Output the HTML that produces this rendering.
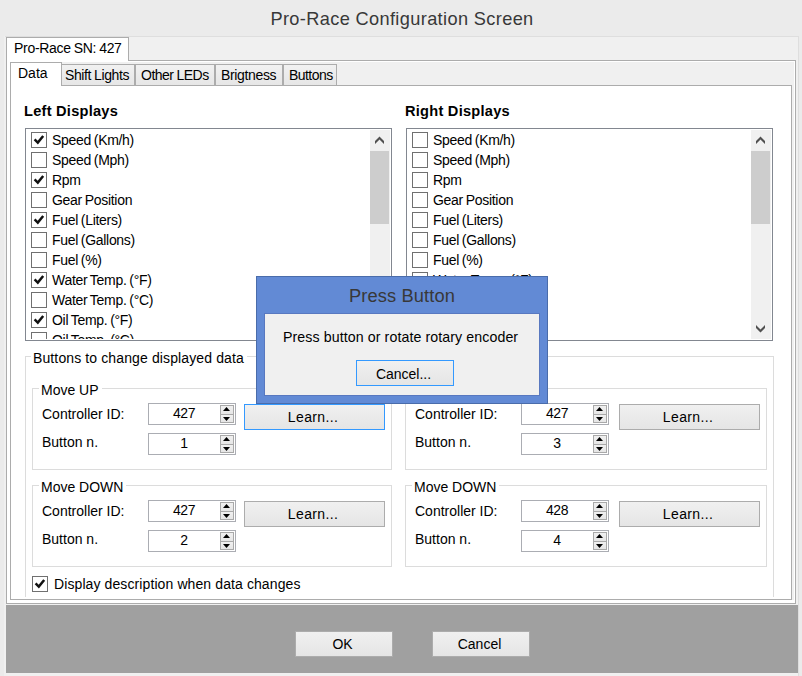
<!DOCTYPE html>
<html>
<head>
<meta charset="utf-8">
<title>Pro-Race Configuration Screen</title>
<style>
html,body{margin:0;padding:0;}
body{width:802px;height:676px;overflow:hidden;background:#ebebeb;position:relative;
  font-family:"Liberation Sans",sans-serif;font-size:14px;color:#000;}
*{box-sizing:border-box;}
.abs{position:absolute;}
.t{position:absolute;white-space:nowrap;line-height:16px;height:16px;}
.title{position:absolute;left:1px;top:6px;width:802px;text-align:center;font-family:"Liberation Sans",sans-serif;
  font-size:18.2px;letter-spacing:0.36px;line-height:26px;color:#383838;white-space:nowrap;}
/* window client */
#client{left:4px;top:36px;width:795px;height:640px;background:#f0f0f0;}
#cl-top{left:5px;top:36px;width:794px;height:1px;background:#dedede;}
#cl-right{left:798px;top:36px;width:1px;height:640px;background:#dedede;}
/* outer tab */
#opane{left:6px;top:60px;width:790px;height:544px;border:1px solid #acacac;background:#fff;}
#otab{left:6px;top:37px;width:123px;height:24px;border:1px solid #acacac;border-bottom:none;background:#fff;}
/* inner tab control */
#istrip{left:10px;top:62px;width:784px;height:24px;background:#f0f0f0;}
#imargin{left:10px;top:62px;width:784px;height:538px;background:#f0f0f0;}
#ipane{left:10px;top:85px;width:782px;height:515px;border:1px solid #acacac;background:#fff;}
.itab{position:absolute;top:64px;height:21px;border:1px solid #acacac;border-bottom:none;border-left:none;
  background:linear-gradient(#f1f1f1,#e6e6e6);}
#itab0{left:10px;top:62px;width:52px;height:24px;border:1px solid #acacac;border-bottom:none;background:#fff;}
/* listbox */
.lb{position:absolute;top:128px;height:213px;border:1px solid #828790;background:#fff;overflow:hidden;font-size:14px;letter-spacing:-0.3px;word-spacing:-0.8px;}
.cb{position:absolute;width:16px;height:16px;border:1px solid #707070;background:#fff;}
.cb svg{position:absolute;left:0;top:0;}
.sb{position:absolute;top:1px;right:1px;width:20px;height:209px;background:#f0f0f0;}
.sb .thumb{position:absolute;left:0;top:21px;width:19px;height:73px;background:#cdcdcd;}
.sb svg{position:absolute;left:0;}
/* groupbox */
.gb{position:absolute;border:1px solid #dcdcdc;}
.gbl{position:absolute;background:#fff;white-space:nowrap;line-height:16px;height:16px;padding:0 3px 0 2px;}
/* spin */
.spin{position:absolute;width:88px;height:22px;border:1px solid #abadb3;background:#fff;}
.spin .v{position:absolute;left:0;top:1px;width:70px;text-align:center;line-height:16px;font-size:14px;letter-spacing:-0.5px;}
.spin .u,.spin .d{position:absolute;left:71px;width:14px;border:1px solid #a9a9a9;background:linear-gradient(#f0f0f0,#e6e6e6);}
.spin .u{top:1px;height:10px;}
.spin .d{top:10px;height:9px;}
.spin svg{position:absolute;left:0;top:0;}
/* buttons */
.btn{position:absolute;border:1px solid #acacac;background:linear-gradient(#f0f0f0,#e5e5e5);text-align:center;white-space:nowrap;padding-right:3px;}
.btn.focus{border-color:#3399ff;}
/* popup */
#popup{left:256px;top:276px;width:292px;height:128px;background:#628ad5;border:1px solid #4a6caa;}
#pclient{left:264px;top:313px;width:276px;height:83px;background:#f0f0f0;border:1px solid #5878c0;}
#ptitle{left:256px;top:283px;width:292px;text-align:center;font-size:18.3px;letter-spacing:0.1px;line-height:26px;color:#383838;white-space:nowrap;}
/* bottom band */
#band{left:6px;top:605px;width:792px;height:68px;background:#a0a0a0;}
</style>
</head>
<body>
<div class="title">Pro-Race Configuration Screen</div>
<div class="abs" id="client"></div>
<div class="abs" id="cl-top"></div>
<div class="abs" id="cl-right"></div>

<div class="abs" id="opane"></div>
<div class="abs" id="otab"></div>
<div class="t" style="left:14px;top:40px;letter-spacing:-0.3px;word-spacing:-0.6px;">Pro-Race SN: 427</div>

<div class="abs" id="imargin"></div>
<div class="abs" id="ipane"></div>
<div class="itab" style="left:62px;width:73px;"></div>
<div class="itab" style="left:135px;width:80px;border-left:1px solid #acacac;"></div>
<div class="itab" style="left:215px;width:68px;border-left:1px solid #acacac;"></div>
<div class="itab" style="left:283px;width:54px;border-left:1px solid #acacac;"></div>
<div class="abs" id="itab0"></div>
<div class="t" style="left:18px;top:65px;">Data</div>
<div class="t" style="left:65px;top:67px;letter-spacing:-0.4px;word-spacing:-0.4px;">Shift Lights</div>
<div class="t" style="left:141px;top:67px;letter-spacing:-0.5px;word-spacing:-0.5px;">Other LEDs</div>
<div class="t" style="left:221px;top:67px;letter-spacing:-0.35px;">Brigtness</div>
<div class="t" style="left:289px;top:67px;letter-spacing:-0.55px;">Buttons</div>

<div class="t" style="left:24px;top:103px;font-weight:bold;font-size:14.6px;letter-spacing:0.25px;">Left Displays</div>
<div class="t" style="left:405px;top:103px;font-weight:bold;font-size:14.6px;letter-spacing:0.25px;">Right Displays</div>

<!-- LEFT LISTBOX -->
<div class="lb" id="lbL" style="left:25px;width:367px;">
  <div class="cb" style="left:5px;top:3px;"><svg width="14" height="14" viewBox="0 0 14 14"><path d="M2.6 6.4 L5.8 9.6 L11.2 3.0" fill="none" stroke="#111" stroke-width="2.5"/></svg></div><div class="t" style="left:26px;top:3px;">Speed (Km/h)</div>
  <div class="cb" style="left:5px;top:23px;"></div><div class="t" style="left:26px;top:23px;">Speed (Mph)</div>
  <div class="cb" style="left:5px;top:43px;"><svg width="14" height="14" viewBox="0 0 14 14"><path d="M2.6 6.4 L5.8 9.6 L11.2 3.0" fill="none" stroke="#111" stroke-width="2.5"/></svg></div><div class="t" style="left:26px;top:43px;">Rpm</div>
  <div class="cb" style="left:5px;top:63px;"></div><div class="t" style="left:26px;top:63px;">Gear Position</div>
  <div class="cb" style="left:5px;top:83px;"><svg width="14" height="14" viewBox="0 0 14 14"><path d="M2.6 6.4 L5.8 9.6 L11.2 3.0" fill="none" stroke="#111" stroke-width="2.5"/></svg></div><div class="t" style="left:26px;top:83px;">Fuel (Liters)</div>
  <div class="cb" style="left:5px;top:103px;"></div><div class="t" style="left:26px;top:103px;">Fuel (Gallons)</div>
  <div class="cb" style="left:5px;top:123px;"></div><div class="t" style="left:26px;top:123px;">Fuel (%)</div>
  <div class="cb" style="left:5px;top:143px;"><svg width="14" height="14" viewBox="0 0 14 14"><path d="M2.6 6.4 L5.8 9.6 L11.2 3.0" fill="none" stroke="#111" stroke-width="2.5"/></svg></div><div class="t" style="left:26px;top:143px;">Water Temp. (°F)</div>
  <div class="cb" style="left:5px;top:163px;"></div><div class="t" style="left:26px;top:163px;">Water Temp. (°C)</div>
  <div class="cb" style="left:5px;top:183px;"><svg width="14" height="14" viewBox="0 0 14 14"><path d="M2.6 6.4 L5.8 9.6 L11.2 3.0" fill="none" stroke="#111" stroke-width="2.5"/></svg></div><div class="t" style="left:26px;top:183px;">Oil Temp. (°F)</div>
  <div class="cb" style="left:5px;top:203px;"></div><div class="t" style="left:26px;top:203px;">Oil Temp. (°C)</div>
  <div class="abs" style="left:0;bottom:0;width:100%;height:1px;background:#fff;"></div>
  <div class="sb">
    <div class="thumb"></div>
    <svg width="20" height="21" style="top:0"><path d="M5 11 L9.5 6.5 L14 11 L14 14 L9.5 9.5 L5 14 Z" fill="#505050"/></svg>
    <svg width="20" height="21" style="top:188px"><path d="M5 7 L9.5 11.5 L14 7 L14 10 L9.5 14.5 L5 10 Z" fill="#505050"/></svg>
  </div>
</div>
<!-- RIGHT LISTBOX -->
<div class="lb" id="lbR" style="left:406px;width:367px;">
  <div class="cb" style="left:5px;top:3px;"></div><div class="t" style="left:26px;top:3px;">Speed (Km/h)</div>
  <div class="cb" style="left:5px;top:23px;"></div><div class="t" style="left:26px;top:23px;">Speed (Mph)</div>
  <div class="cb" style="left:5px;top:43px;"></div><div class="t" style="left:26px;top:43px;">Rpm</div>
  <div class="cb" style="left:5px;top:63px;"></div><div class="t" style="left:26px;top:63px;">Gear Position</div>
  <div class="cb" style="left:5px;top:83px;"></div><div class="t" style="left:26px;top:83px;">Fuel (Liters)</div>
  <div class="cb" style="left:5px;top:103px;"></div><div class="t" style="left:26px;top:103px;">Fuel (Gallons)</div>
  <div class="cb" style="left:5px;top:123px;"></div><div class="t" style="left:26px;top:123px;">Fuel (%)</div>
  <div class="cb" style="left:5px;top:143px;"></div><div class="t" style="left:26px;top:143px;">Water Temp. (°F)</div>
  <div class="cb" style="left:5px;top:163px;"></div><div class="t" style="left:26px;top:163px;">Water Temp. (°C)</div>
  <div class="cb" style="left:5px;top:183px;"></div><div class="t" style="left:26px;top:183px;">Oil Temp. (°F)</div>
  <div class="cb" style="left:5px;top:203px;"></div><div class="t" style="left:26px;top:203px;">Oil Temp. (°C)</div>
  <div class="abs" style="left:0;bottom:0;width:100%;height:1px;background:#fff;"></div>
  <div class="sb">
    <div class="thumb"></div>
    <svg width="20" height="21" style="top:0"><path d="M5 11 L9.5 6.5 L14 11 L14 14 L9.5 9.5 L5 14 Z" fill="#505050"/></svg>
    <svg width="20" height="21" style="top:188px"><path d="M5 7 L9.5 11.5 L14 7 L14 10 L9.5 14.5 L5 10 Z" fill="#505050"/></svg>
  </div>
</div>

<!-- GROUPBOXES -->
<div class="gb" style="left:25px;top:356px;width:749px;height:241px;border-bottom:none;"></div>
<div class="gbl" style="left:31px;top:350px;letter-spacing:0.12px;">Buttons to change displayed data</div>

<div class="gb" style="left:32px;top:388px;width:360px;height:82px;"></div>
<div class="gbl" style="left:39px;top:382px;">Move UP</div>
<div class="gb" style="left:405px;top:388px;width:362px;height:82px;"></div>
<div class="gbl" style="left:412px;top:382px;">Move UP</div>
<div class="gb" style="left:32px;top:485px;width:360px;height:82px;"></div>
<div class="gbl" style="left:39px;top:479px;">Move DOWN</div>
<div class="gb" style="left:405px;top:485px;width:362px;height:82px;"></div>
<div class="gbl" style="left:412px;top:479px;">Move DOWN</div>

<div class="t" style="left:42px;top:406px;">Controller ID:</div>
<div class="t" style="left:42px;top:434px;">Button n.</div>
<div class="spin" style="left:148px;top:403px;"><div class="v">427</div><div class="u"><svg width="12" height="7"><path d="M2 5 L5.5 1 L9 5 Z" fill="#000"/></svg></div><div class="d"><svg width="12" height="7"><path d="M2 2 L5.5 6 L9 2 Z" fill="#000"/></svg></div></div>
<div class="spin" style="left:148px;top:433px;"><div class="v">1</div><div class="u"><svg width="12" height="7"><path d="M2 5 L5.5 1 L9 5 Z" fill="#000"/></svg></div><div class="d"><svg width="12" height="7"><path d="M2 2 L5.5 6 L9 2 Z" fill="#000"/></svg></div></div>
<div class="btn focus" style="left:244px;top:404px;width:141px;height:26px;line-height:24px;letter-spacing:0.35px;">Learn...</div>
<div class="t" style="left:415px;top:406px;">Controller ID:</div>
<div class="t" style="left:415px;top:434px;">Button n.</div>
<div class="spin" style="left:521px;top:403px;"><div class="v">427</div><div class="u"><svg width="12" height="7"><path d="M2 5 L5.5 1 L9 5 Z" fill="#000"/></svg></div><div class="d"><svg width="12" height="7"><path d="M2 2 L5.5 6 L9 2 Z" fill="#000"/></svg></div></div>
<div class="spin" style="left:521px;top:433px;"><div class="v">3</div><div class="u"><svg width="12" height="7"><path d="M2 5 L5.5 1 L9 5 Z" fill="#000"/></svg></div><div class="d"><svg width="12" height="7"><path d="M2 2 L5.5 6 L9 2 Z" fill="#000"/></svg></div></div>
<div class="btn" style="left:619px;top:404px;width:141px;height:26px;line-height:24px;letter-spacing:0.35px;">Learn...</div>
<div class="t" style="left:42px;top:503px;">Controller ID:</div>
<div class="t" style="left:42px;top:531px;">Button n.</div>
<div class="spin" style="left:148px;top:500px;"><div class="v">427</div><div class="u"><svg width="12" height="7"><path d="M2 5 L5.5 1 L9 5 Z" fill="#000"/></svg></div><div class="d"><svg width="12" height="7"><path d="M2 2 L5.5 6 L9 2 Z" fill="#000"/></svg></div></div>
<div class="spin" style="left:148px;top:530px;"><div class="v">2</div><div class="u"><svg width="12" height="7"><path d="M2 5 L5.5 1 L9 5 Z" fill="#000"/></svg></div><div class="d"><svg width="12" height="7"><path d="M2 2 L5.5 6 L9 2 Z" fill="#000"/></svg></div></div>
<div class="btn" style="left:244px;top:501px;width:141px;height:26px;line-height:24px;letter-spacing:0.35px;">Learn...</div>
<div class="t" style="left:415px;top:503px;">Controller ID:</div>
<div class="t" style="left:415px;top:531px;">Button n.</div>
<div class="spin" style="left:521px;top:500px;"><div class="v">428</div><div class="u"><svg width="12" height="7"><path d="M2 5 L5.5 1 L9 5 Z" fill="#000"/></svg></div><div class="d"><svg width="12" height="7"><path d="M2 2 L5.5 6 L9 2 Z" fill="#000"/></svg></div></div>
<div class="spin" style="left:521px;top:530px;"><div class="v">4</div><div class="u"><svg width="12" height="7"><path d="M2 5 L5.5 1 L9 5 Z" fill="#000"/></svg></div><div class="d"><svg width="12" height="7"><path d="M2 2 L5.5 6 L9 2 Z" fill="#000"/></svg></div></div>
<div class="btn" style="left:619px;top:501px;width:141px;height:26px;line-height:24px;letter-spacing:0.35px;">Learn...</div>
<div class="cb" style="left:32px;top:576px;"><svg width="14" height="14" viewBox="0 0 14 14"><path d="M2.6 6.4 L5.8 9.6 L11.2 3.0" fill="none" stroke="#111" stroke-width="2.5"/></svg></div>
<div class="t" style="left:54px;top:576px;letter-spacing:0.1px;">Display description when data changes</div>
<div class="abs" id="band"></div>
<div class="btn" style="left:295px;top:631px;width:98px;height:26px;line-height:24px;">OK</div>
<div class="btn" style="left:432px;top:631px;width:98px;height:26px;line-height:24px;">Cancel</div>
<div class="abs" id="popup"></div>
<div class="abs" id="pclient"></div>
<div class="abs" id="ptitle">Press Button</div>
<div class="t" style="left:283px;top:329px;font-size:14.2px;letter-spacing:0.09px;">Press button or rotate rotary encoder</div>
<div class="btn focus" style="left:356px;top:360px;width:98px;height:26px;line-height:26px;">Cancel...</div>
</body>
</html>
